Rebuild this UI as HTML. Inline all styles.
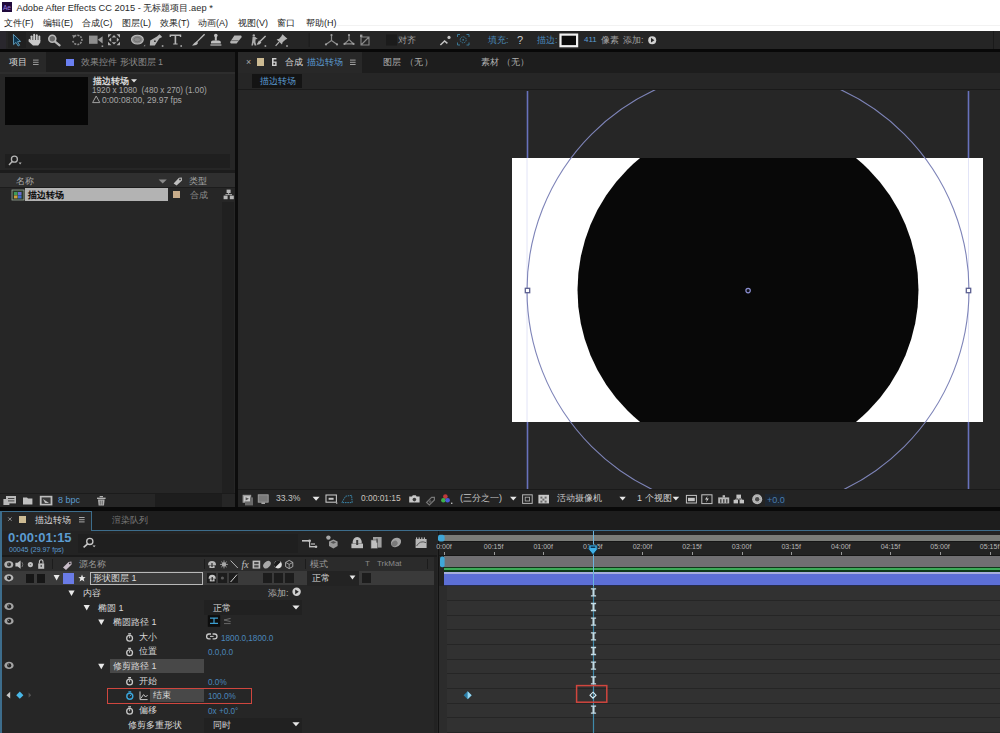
<!DOCTYPE html>
<html><head><meta charset="utf-8">
<style>
html,body{margin:0;padding:0;}
body{width:1000px;height:733px;overflow:hidden;position:relative;background:#262626;font-family:"Liberation Sans",sans-serif;}
.a{position:absolute;}
.t{position:absolute;white-space:nowrap;font-size:9px;line-height:10px;color:#a8a8a8;}
.b{color:#5b9bd0;}
.w{color:#d8d8d8;}
</style></head><body>

<!-- title bar + menu -->
<div class="a" style="left:0;top:0;width:1000px;height:31px;background:#fff;"></div>
<div class="a" style="left:337px;top:25px;width:663px;height:1px;background:#f2f2f2;"></div>
<div class="a" style="left:1.5px;top:2.4px;width:10.5px;height:9.6px;background:#200a3c;"></div>
<div class="t" style="left:3px;top:3.5px;font-size:6.5px;line-height:8px;color:#9c80e0;">Ae</div>
<div class="t" style="left:16.5px;top:3px;font-size:9.3px;line-height:11px;color:#2a2a2a;">Adobe After Effects CC 2015 - 无标题项目.aep *</div>
<div class="t" style="left:4px;top:18px;color:#1c1c1c;">文件(F)</div>
<div class="t" style="left:43px;top:18px;color:#1c1c1c;">编辑(E)</div>
<div class="t" style="left:82px;top:18px;color:#1c1c1c;">合成(C)</div>
<div class="t" style="left:122px;top:18px;color:#1c1c1c;">图层(L)</div>
<div class="t" style="left:160px;top:18px;color:#1c1c1c;">效果(T)</div>
<div class="t" style="left:198px;top:18px;color:#1c1c1c;">动画(A)</div>
<div class="t" style="left:238px;top:18px;color:#1c1c1c;">视图(V)</div>
<div class="t" style="left:277px;top:18px;color:#1c1c1c;">窗口</div>
<div class="t" style="left:306px;top:18px;color:#1c1c1c;">帮助(H)</div>

<!-- toolbar -->
<div class="a" style="left:0;top:31px;width:1000px;height:18px;background:#252525;"></div>
<div class="a" style="left:0;top:49px;width:1000px;height:3px;background:#080808;"></div>

<div class="t" style="left:398px;top:35px;color:#a0a0a0;">对齐</div>
<div class="t b" style="left:488px;top:35px;color:#4a88b8;">填充:</div>
<div class="t" style="left:517px;top:34px;color:#c8c8c8;font-size:11px;line-height:12px;">?</div>
<div class="t b" style="left:537px;top:35px;color:#4a88b8;">描边:</div>
<div class="t b" style="left:584px;top:35px;font-size:8px;">411</div>
<div class="t" style="left:601px;top:35px;color:#a0a0a0;">像素</div>
<div class="t" style="left:623px;top:35px;color:#a0a0a0;">添加:</div>

<!-- PROJECT PANEL -->
<div class="a" style="left:0;top:52px;width:235px;height:21px;background:#1d1d1d;"></div>
<div class="a" style="left:0;top:52px;width:46px;height:21px;background:#282828;"></div>
<div class="t w" style="left:9px;top:57px;">项目</div>
<div class="a" style="left:66px;top:59px;width:8px;height:7px;background:#6a7ff0;"></div>
<div class="t" style="left:81px;top:57px;color:#8a8a8a;">效果控件 形状图层 1</div>
<div class="a" style="left:0;top:73px;width:235px;height:434px;background:#262626;"></div>
<div class="a" style="left:0;top:72px;width:235px;height:2px;background:#2d2d2d;"></div>
<div class="a" style="left:5px;top:77px;width:83px;height:48px;background:#070707;"></div>
<div class="t w" style="left:93px;top:76px;font-weight:bold;">描边转场</div>
<div class="t" style="left:92px;top:86px;font-size:8.2px;">1920 x 1080 &nbsp;(480 x 270) (1.00)</div>
<div class="t" style="left:102px;top:95px;font-size:8.5px;">0:00:08:00, 29.97 fps</div>
<div class="a" style="left:5px;top:154px;width:225px;height:14px;background:#1f1f1f;"></div>
<div class="a" style="left:0;top:169.5px;width:235px;height:3.5px;background:#1c1c1c;"></div>
<div class="a" style="left:0;top:173px;width:235px;height:13.5px;background:#2f2f2f;"></div>
<div class="t" style="left:16px;top:176px;">名称</div>
<div class="t" style="left:189px;top:176px;">类型</div>
<div class="a" style="left:0;top:186.5px;width:235px;height:1.5px;background:#1c1c1c;"></div>
<div class="a" style="left:25px;top:188px;width:143px;height:13px;background:#b3b3b3;"></div>
<div class="t" style="left:28px;top:190px;color:#0a0a0a;font-weight:bold;">描边转场</div>
<div class="a" style="left:173px;top:191px;width:7px;height:7px;background:#c8ac8a;"></div>
<div class="t" style="left:190px;top:190px;color:#8a8a8a;">合成</div>
<div class="a" style="left:222px;top:202px;width:12px;height:291px;background:#202020;"></div>
<div class="a" style="left:0;top:493px;width:235px;height:14px;background:#262626;"></div>
<div class="t b" style="left:58px;top:495px;">8 bpc</div>

<!-- gap -->
<div class="a" style="left:235px;top:52px;width:3px;height:455px;background:#0c0c0c;"></div>

<!-- COMP PANEL -->
<div class="a" style="left:238px;top:52px;width:762px;height:21px;background:#1d1d1d;"></div>
<div class="a" style="left:238px;top:52px;width:124px;height:21px;background:#282828;"></div>
<div class="t" style="left:246px;top:57px;">×</div>
<div class="a" style="left:257px;top:58px;width:7px;height:8px;background:#cdbb93;"></div>
<div class="t w" style="left:285px;top:57px;">合成</div>
<div class="t b" style="left:307px;top:57px;">描边转场</div>
<div class="t" style="left:383px;top:57px;letter-spacing:0.4px;color:#b0b0b0;">图层 （无）</div>
<div class="t" style="left:481px;top:57px;color:#b0b0b0;">素材 （无）</div>
<div class="a" style="left:238px;top:73px;width:762px;height:16px;background:#262626;"></div>
<div class="a" style="left:252px;top:74px;width:50px;height:14px;background:#141414;"></div>
<div class="t b" style="left:260px;top:76px;">描边转场</div>
<div class="a" style="left:238px;top:89px;width:762px;height:1px;background:#1a1a1a;"></div>
<div class="a" style="left:238px;top:90px;width:762px;height:399px;background:#262626;"></div>

<!-- viewer drawing -->
<svg class="a" style="left:238px;top:90px;" width="762" height="399" viewBox="238 90 762 399">
  <rect x="512" y="158" width="471" height="264" fill="#ffffff"/>
  <clipPath id="cl"><rect x="512" y="158" width="471" height="264"/></clipPath>
  <circle cx="748" cy="290" r="170.5" fill="#080808" clip-path="url(#cl)"/>
  <line x1="527" y1="158.5" x2="527" y2="421.5" stroke="#c4c8ee" stroke-width="1" stroke-dasharray="1 1"/>
  <line x1="968.5" y1="158.5" x2="968.5" y2="421.5" stroke="#c4c8ee" stroke-width="1" stroke-dasharray="1 1"/>
  <circle cx="748" cy="290.3" r="221" fill="none" stroke="#7e84b8" stroke-width="1.1"/>
  <path d="M527.5,91 L527.5,158 M527.5,422 L527.5,489 M968.5,91 L968.5,158 M968.5,422 L968.5,489" stroke="#6872bc" stroke-width="1.6"/>
  <rect x="525.3" y="288.3" width="4.4" height="4.4" fill="#fff" stroke="#5c6090" stroke-width="1.3"/>
  <rect x="966.3" y="288.3" width="4.4" height="4.4" fill="#fff" stroke="#5c6090" stroke-width="1.3"/>
  <circle cx="748.1" cy="290.6" r="2.2" fill="#101018" stroke="#8a8ed0" stroke-width="1.2"/>
</svg>

<!-- comp bottom toolbar -->
<div class="a" style="left:238px;top:489px;width:762px;height:18px;background:#232323;"></div>
<div class="t" style="left:276px;top:493px;font-size:8.6px;color:#c4c4c4;">33.3%</div>
<div class="t" style="left:361px;top:493px;font-size:8.4px;color:#c8c2bc;">0:00:01:15</div>
<div class="t" style="left:460px;top:493px;color:#c8c8c8;">(三分之一)</div>
<div class="t" style="left:557px;top:493px;color:#c8c8c8;">活动摄像机</div>
<div class="t" style="left:637px;top:493px;color:#d0d0d0;">1 个视图</div>
<div class="a" style="left:765px;top:494px;width:20px;height:12px;background:#1d2631;"></div>
<div class="t b" style="left:767px;top:495px;color:#4a7cae;">+0.0</div>

<!-- black strip -->
<div class="a" style="left:0;top:507px;width:1000px;height:4px;background:#090909;"></div>

<!-- TIMELINE PANEL -->
<div class="a" style="left:0;top:511px;width:1000px;height:222px;background:#262626;"></div>
<div class="a" style="left:0;top:511px;width:1000px;height:20px;background:#1d1d1d;"></div>
<div class="a" style="left:1px;top:511px;width:91px;height:20px;background:#262626;border:1px solid #3d6d8c;border-bottom:none;box-sizing:border-box;"></div>
<div class="a" style="left:92px;top:530px;width:908px;height:1px;background:#3d6d8c;"></div>
<div class="a" style="left:0;top:511px;width:2px;height:222px;background:#3d6d8c;"></div>
<div class="a" style="left:19px;top:516px;width:7px;height:7px;background:#cdbb93;"></div>
<div class="t w" style="left:35px;top:515px;">描边转场</div>
<div class="t" style="left:112px;top:515px;color:#7a7a7a;">渲染队列</div>


<!-- timeline left -->
<div class="a" style="left:2px;top:531px;width:435px;height:25px;background:#232323;"></div>
<div class="a" style="left:78px;top:534px;width:220px;height:19px;background:#1f1f1f;"></div>
<div class="t b" style="left:8px;top:531px;font-size:13px;line-height:14px;font-weight:bold;">0:00:01:15</div>
<div class="t b" style="left:9px;top:546px;font-size:7px;line-height:8px;">00045 (29.97 fps)</div>
<div class="a" style="left:2px;top:555px;width:435px;height:2px;background:#1a1a1a;"></div>
<div class="a" style="left:2px;top:557px;width:435px;height:14px;background:#2b2b2b;"></div>
<div class="a" style="left:2px;top:571px;width:435px;height:14px;background:#3a3a3a;"></div>
<div class="a" style="left:2px;top:585px;width:435px;height:148px;background:#262626;"></div>
<div class="a" style="left:434px;top:557px;width:3px;height:176px;background:#222;"></div>
<!-- header texts -->
<div class="t" style="left:79px;top:559px;color:#9a9a9a;">源名称</div>
<div class="t" style="left:310px;top:559px;color:#9a9a9a;">模式</div>
<div class="t" style="left:365px;top:559px;color:#8a8a8a;font-size:8px;">T</div>
<div class="t" style="left:377px;top:559px;color:#8a8a8a;font-size:8px;">TrkMat</div>
<div class="a" style="left:52px;top:559px;width:1px;height:10px;background:#1c1c1c;"></div>
<div class="a" style="left:204px;top:559px;width:1px;height:10px;background:#1c1c1c;"></div>
<div class="a" style="left:305px;top:559px;width:1px;height:10px;background:#1c1c1c;"></div>
<div class="a" style="left:427px;top:559px;width:1px;height:10px;background:#1c1c1c;"></div>
<!-- layer row -->
<div class="a" style="left:26px;top:574px;width:8px;height:9px;background:#161616;"></div>
<div class="a" style="left:37px;top:574px;width:8px;height:9px;background:#161616;"></div>
<div class="a" style="left:63px;top:572.5px;width:11px;height:11.5px;background:#6a7be6;"></div>
<div class="a" style="left:90px;top:572px;width:113px;height:13px;border:1px solid #b9b9b9;box-sizing:border-box;background:#3a3a3a;"></div>
<div class="t w" style="left:93px;top:573px;">形状图层 1</div>
<div class="a" style="left:207px;top:573px;width:9px;height:10px;background:#1c1c1c;"></div>
<div class="a" style="left:218px;top:573px;width:9px;height:10px;background:#1c1c1c;"></div>
<div class="a" style="left:229px;top:573px;width:9px;height:10px;background:#1c1c1c;"></div>
<div class="a" style="left:263px;top:573px;width:9px;height:10px;background:#1c1c1c;"></div>
<div class="a" style="left:274px;top:573px;width:9px;height:10px;background:#1c1c1c;"></div>
<div class="a" style="left:285px;top:573px;width:9px;height:10px;background:#1c1c1c;"></div>
<div class="a" style="left:307px;top:571px;width:52px;height:15px;background:#232323;"></div>
<div class="t w" style="left:312px;top:573px;">正常</div>
<div class="a" style="left:362px;top:573px;width:9px;height:10px;background:#1c1c1c;"></div>
<!-- property rows -->
<div class="t w" style="left:83px;top:588px;">内容</div>
<div class="t" style="left:268px;top:588px;color:#b0b0b0;">添加:</div>
<div class="t w" style="left:98px;top:603px;">椭圆 1</div>
<div class="a" style="left:204px;top:600px;width:98px;height:15px;background:#212121;"></div>
<div class="t w" style="left:213px;top:603px;">正常</div>
<div class="t w" style="left:113px;top:617px;">椭圆路径 1</div>
<div class="t w" style="left:139px;top:632px;">大小</div>
<div class="t b" style="left:221px;top:633.5px;font-size:8.2px;color:#4a86bc;">1800.0,1800.0</div>
<div class="t w" style="left:139px;top:646px;">位置</div>
<div class="t b" style="left:208px;top:647.5px;font-size:8.2px;color:#4a86bc;">0.0,0.0</div>
<div class="a" style="left:110px;top:659px;width:94px;height:14px;background:#484848;"></div>
<div class="t w" style="left:113px;top:661px;">修剪路径 1</div>
<div class="t w" style="left:139px;top:676px;">开始</div>
<div class="t b" style="left:208px;top:677.5px;font-size:8.2px;color:#4a86bc;">0.0%</div>
<div class="a" style="left:150px;top:689px;width:54px;height:13px;background:#484848;"></div>
<div class="t w" style="left:153px;top:690px;">结束</div>
<div class="t b" style="left:208px;top:691.5px;font-size:8.2px;color:#4a86bc;">100.0%</div>
<div class="a" style="left:107px;top:688px;width:145px;height:16px;border:1.5px solid #d0463e;box-sizing:border-box;"></div>
<div class="t w" style="left:139px;top:705px;">偏移</div>
<div class="t b" style="left:208px;top:706.5px;font-size:8.2px;color:#4a86bc;">0x +0.0°</div>
<div class="t w" style="left:128px;top:720px;">修剪多重形状</div>
<div class="a" style="left:204px;top:718px;width:98px;height:15px;background:#212121;"></div>
<div class="t w" style="left:213px;top:720px;">同时</div>

<!-- timeline right -->
<div class="a" style="left:438px;top:531px;width:562px;height:202px;background:#232323;"></div>
<div class="a" style="left:437.5px;top:531px;width:1.5px;height:202px;background:#121212;"></div>
<div class="a" style="left:444px;top:535px;width:556px;height:6px;background:#7a7c78;"></div>
<div class="a" style="left:439px;top:541px;width:561px;height:1px;background:#161616;"></div>
<div class="t" style="left:429.0px;top:543px;width:30px;text-align:center;font-size:7px;line-height:8px;color:#b8b8b8;">0:00f</div>
<div class="a" style="left:444.0px;top:552px;width:1px;height:3px;background:#9a9a9a;"></div>
<div class="t" style="left:478.6px;top:543px;width:30px;text-align:center;font-size:7px;line-height:8px;color:#b8b8b8;">00:15f</div>
<div class="a" style="left:493.6px;top:552px;width:1px;height:3px;background:#9a9a9a;"></div>
<div class="t" style="left:528.2px;top:543px;width:30px;text-align:center;font-size:7px;line-height:8px;color:#b8b8b8;">01:00f</div>
<div class="a" style="left:543.2px;top:552px;width:1px;height:3px;background:#9a9a9a;"></div>
<div class="t" style="left:577.8px;top:543px;width:30px;text-align:center;font-size:7px;line-height:8px;color:#b8b8b8;">01:15f</div>
<div class="a" style="left:592.8px;top:552px;width:1px;height:3px;background:#9a9a9a;"></div>
<div class="t" style="left:627.4px;top:543px;width:30px;text-align:center;font-size:7px;line-height:8px;color:#b8b8b8;">02:00f</div>
<div class="a" style="left:642.4px;top:552px;width:1px;height:3px;background:#9a9a9a;"></div>
<div class="t" style="left:677.0px;top:543px;width:30px;text-align:center;font-size:7px;line-height:8px;color:#b8b8b8;">02:15f</div>
<div class="a" style="left:692.0px;top:552px;width:1px;height:3px;background:#9a9a9a;"></div>
<div class="t" style="left:726.6px;top:543px;width:30px;text-align:center;font-size:7px;line-height:8px;color:#b8b8b8;">03:00f</div>
<div class="a" style="left:741.6px;top:552px;width:1px;height:3px;background:#9a9a9a;"></div>
<div class="t" style="left:776.2px;top:543px;width:30px;text-align:center;font-size:7px;line-height:8px;color:#b8b8b8;">03:15f</div>
<div class="a" style="left:791.2px;top:552px;width:1px;height:3px;background:#9a9a9a;"></div>
<div class="t" style="left:825.8px;top:543px;width:30px;text-align:center;font-size:7px;line-height:8px;color:#b8b8b8;">04:00f</div>
<div class="a" style="left:840.8px;top:552px;width:1px;height:3px;background:#9a9a9a;"></div>
<div class="t" style="left:875.4px;top:543px;width:30px;text-align:center;font-size:7px;line-height:8px;color:#b8b8b8;">04:15f</div>
<div class="a" style="left:890.4px;top:552px;width:1px;height:3px;background:#9a9a9a;"></div>
<div class="t" style="left:925.0px;top:543px;width:30px;text-align:center;font-size:7px;line-height:8px;color:#b8b8b8;">05:00f</div>
<div class="a" style="left:940.0px;top:552px;width:1px;height:3px;background:#9a9a9a;"></div>
<div class="t" style="left:974.6px;top:543px;width:30px;text-align:center;font-size:7px;line-height:8px;color:#b8b8b8;">05:15f</div>
<div class="a" style="left:989.6px;top:552px;width:1px;height:3px;background:#9a9a9a;"></div>
<div class="a" style="left:439px;top:555px;width:561px;height:1px;background:#161616;"></div>
<div class="a" style="left:444px;top:556px;width:556px;height:11px;background:#706f72;"></div>
<div class="a" style="left:444px;top:566.5px;width:556px;height:5.5px;background:#0e3818;"></div>
<div class="a" style="left:444px;top:568px;width:556px;height:2px;background:#3cab58;"></div>
<div class="a" style="left:444px;top:572px;width:556px;height:13px;background:#5c6fd6;"></div>
<div class="a" style="left:444px;top:585px;width:556px;height:1px;background:#262c4e;"></div>
<div class="a" style="left:444px;top:572px;width:556px;height:1.6px;background:#a6aedd;"></div>
<div class="a" style="left:439px;top:586px;width:561px;height:147px;background:#2c2c2c;"></div>
<div class="a" style="left:447px;top:586px;width:553px;height:147px;background:#313131;"></div>
<div class="a" style="left:447px;top:600.3px;width:553px;height:1px;background:#252525;"></div>
<div class="a" style="left:447px;top:614.8px;width:553px;height:1px;background:#252525;"></div>
<div class="a" style="left:447px;top:629.3px;width:553px;height:1px;background:#252525;"></div>
<div class="a" style="left:447px;top:643.8px;width:553px;height:1px;background:#252525;"></div>
<div class="a" style="left:447px;top:658.8px;width:553px;height:1px;background:#252525;"></div>
<div class="a" style="left:447px;top:673.3px;width:553px;height:1px;background:#252525;"></div>
<div class="a" style="left:447px;top:687.8px;width:553px;height:1px;background:#252525;"></div>
<div class="a" style="left:447px;top:702.8px;width:553px;height:1px;background:#252525;"></div>
<div class="a" style="left:447px;top:717.3px;width:553px;height:1px;background:#252525;"></div>
<div class="a" style="left:447px;top:731.8px;width:553px;height:1px;background:#252525;"></div>
<svg class="a" style="left:0;top:0;" width="1000" height="733" viewBox="0 0 1000 733">
<g id="toolbar">
<rect x="0" y="31" width="6" height="18" fill="#29272d"/>
<rect x="8" y="32" width="18" height="16" fill="#202020"/>
<path d="M13.4,34.4 L13.6,44.6 L16,42.4 L18.2,46 L19.6,45.2 L17.5,41.7 L20.6,41.4 Z" fill="#0b3550" stroke="#6fb0d0" stroke-width="0.8" stroke-linejoin="round"/>
<g fill="#c9c9c9">
<rect x="30.6" y="35.4" width="1.9" height="6" rx="0.95"/>
<rect x="33.2" y="33.8" width="1.9" height="7" rx="0.95"/>
<rect x="35.8" y="34.2" width="1.9" height="7" rx="0.95"/>
<rect x="38.4" y="35.6" width="1.9" height="6" rx="0.95"/>
<path d="M30.6,40 L40.3,40 L40.3,42.6 L38.2,45.6 L33,45.6 L28.6,41.4 L28.6,39.6 L29.8,38.8 Z"/>
</g>
<circle cx="52.3" cy="38.8" r="3.5" fill="#6a6a6a" stroke="#b8b8b8" stroke-width="1.6"/>
<line x1="55" y1="41.6" x2="59.6" y2="45.4" stroke="#b8b8b8" stroke-width="2.2" stroke-linecap="round"/>
<path d="M74.5,36.2 A4.6,4.6 0 1 1 72.8,40.8" fill="none" stroke="#8c8c8c" stroke-width="1.6" stroke-dasharray="2 1"/>
<path d="M72.2,35 L76,35.5 L73.5,38.5 Z" fill="#8c8c8c"/>
<rect x="89" y="35.6" width="8.6" height="8.2" fill="#8e8e8e"/>
<path d="M97.8,39.7 L102.6,36.2 L102.6,43.4 Z" fill="#9a9a9a"/>
<rect x="101.6" y="45.4" width="1.6" height="1.6" fill="#9a9a9a"/>
<g fill="#b0b0b0">
<path d="M108,34.3 L111.5,34.3 L108,37.8 Z M120,34.3 L116.5,34.3 L120,37.8 Z M108,45.3 L111.5,45.3 L108,41.8 Z M120,45.3 L116.5,45.3 L120,41.8 Z"/>
<path d="M114,35 L116.3,37.4 L111.7,37.4 Z M114,44.6 L116.3,42.2 L111.7,42.2 Z M108.8,39.8 L111.2,37.6 L111.2,42 Z M119.2,39.8 L116.8,37.6 L116.8,42 Z"/>
</g>
<rect x="112" y="38" width="4" height="3.6" fill="#2a2a2a"/>
<ellipse cx="137.4" cy="39.6" rx="5.9" ry="4.4" fill="#8a8a8a" stroke="#bdbdbd" stroke-width="1.1"/>
<ellipse cx="137.4" cy="39.6" rx="3.4" ry="2.2" fill="none" stroke="#707070" stroke-width="0.8"/>
<path d="M143.5,46.2 L145.2,44.6 L145.2,46.2 Z" fill="#999"/>
<path d="M159.5,34.3 L162.2,37 L159.3,38.6 L154.8,45.4 L149.8,45.6 L150.2,40.6 L157,36.6 Z" fill="#b5b5b5"/>
<circle cx="154.9" cy="41.2" r="0.9" fill="#333"/>
<rect x="161.8" y="45.2" width="1.6" height="1.6" fill="#aaa"/>
<path d="M169.6,34.6 L181.2,34.6 L181.2,37 L180,37 L179.6,36 L176.2,36 L176.2,43.6 L177.6,43.6 L177.6,44.6 L173.2,44.6 L173.2,43.6 L174.6,43.6 L174.6,36 L171.2,36 L170.8,37 L169.6,37 Z" fill="#b8b8b8"/>
<rect x="180.4" y="45.2" width="1.6" height="1.6" fill="#aaa"/>
<line x1="204.6" y1="34.2" x2="196.4" y2="42.4" stroke="#bcbcbc" stroke-width="1.3"/>
<path d="M196.8,41.6 L198,43 C197,45.2 194.5,45.8 192,45.4 C193.4,44.6 194.6,42.2 196.8,41.6 Z" fill="#bcbcbc"/>
<circle cx="215.8" cy="35.6" r="1.8" fill="#c0c0c0"/>
<rect x="214.8" y="36.6" width="2" height="4" fill="#c0c0c0"/>
<path d="M211,42 Q211,40.4 213,40.4 L218.6,40.4 Q220.8,40.4 220.8,42 L220.8,43.4 L211,43.4 Z" fill="#c0c0c0"/>
<rect x="210.4" y="44.4" width="11" height="1.2" fill="#c0c0c0"/>
<path d="M234.4,35.6 L241,35.6 Q242.2,36.4 241.4,37.6 L236.6,43.6 L231,43.6 Q229.6,42.8 230.4,41.4 Z" fill="#b4b4b4"/>
<line x1="231.2" y1="40.6" x2="238.6" y2="40.6" stroke="#555" stroke-width="0.7"/>
<circle cx="253.8" cy="35.4" r="1.2" fill="#aaa"/>
<path d="M252.6,36.8 L255,36.8 L257.8,39 L255.6,39.2 L255.4,42 L256.4,45.4 L254.6,45.4 L253.6,42.6 L253,45.4 L251.4,45.4 L252.2,41 Z" fill="#aaa"/>
<line x1="265.6" y1="36" x2="260" y2="41.6" stroke="#b8b8b8" stroke-width="1.4"/>
<path d="M256.6,44.6 L259,40.4 L261.4,42.2 C260.4,44.2 258.8,44.8 256.6,44.6 Z" fill="#b8b8b8"/>
<rect x="264.6" y="45.2" width="1.6" height="1.6" fill="#aaa"/>
<path d="M282.4,34.2 L287.4,38.8 L285.4,39.8 L282.6,42.2 L282,44.6 L276.6,39.4 L279.2,38.8 L281.4,36.2 Z" fill="#b4b4b4"/>
<line x1="279" y1="42.2" x2="275.6" y2="45.8" stroke="#b4b4b4" stroke-width="1.2"/>
<rect x="286.2" y="45.2" width="1.6" height="1.6" fill="#aaa"/>
<rect x="308.6" y="33" width="1" height="14" fill="#1c1c1c"/>
<g fill="none" stroke="#8e8e8e" stroke-width="1.2">
<path d="M331.5,35 L331.5,40.4 L326.2,44.2 M331.5,40.4 L336.8,44.2"/>
<path d="M349,35 L349,39.6 M349,39.6 L344.6,43.8 L353.4,43.8 Z"/>
</g>
<g fill="#a0a0a0"><circle cx="331.5" cy="35" r="1.1"/><circle cx="326" cy="44.4" r="1.1"/><circle cx="337" cy="44.4" r="1.1"/><circle cx="349" cy="35" r="1.1"/><circle cx="344.6" cy="43.8" r="1.1"/><circle cx="353.4" cy="43.8" r="1.1"/></g>
<path d="M361,37 L369,37 L369,45 L361,45 Z M361,45 L369,37" fill="none" stroke="#8a8a8a" stroke-width="1.1"/>
<rect x="360" y="34.6" width="2.4" height="2.4" fill="#9a9a9a"/>
<rect x="386" y="34.5" width="11" height="11" fill="#1b1b1b"/>
<path d="M440.4,45 L444.6,41 L447.4,43.4" fill="none" stroke="#c4c4c4" stroke-width="1.5"/>
<circle cx="449" cy="37.4" r="1.6" fill="#c4c4c4"/>
<g fill="none" stroke="#3a7896" stroke-width="1">
<path d="M457.5,37 L457.5,34.5 L460,34.5 M466.5,34.5 L469,34.5 L469,37 M469,42.5 L469,45 L466.5,45 M460,45 L457.5,45 L457.5,42.5"/>
<circle cx="463.2" cy="39.8" r="3" stroke-dasharray="1.5 0.8"/>
</g>
<circle cx="463.2" cy="39.8" r="0.9" fill="#3a7896"/>
<rect x="560.5" y="34.6" width="16.6" height="11.6" fill="#0c0c0c" stroke="#f2f2f2" stroke-width="2.2"/>
<circle cx="652.2" cy="40.2" r="4" fill="#d0d0d0"/>
<path d="M651,37.8 L654.4,40.2 L651,42.6 Z" fill="#252525"/>
<rect x="993" y="31" width="1" height="18" fill="#1a1a1a"/>
</g>

<g id="project">
<g fill="#9a9a9a"><rect x="33" y="59.6" width="5.6" height="1"/><rect x="33" y="61.8" width="5.6" height="1"/><rect x="33" y="64" width="5.6" height="1"/></g>
<path d="M131,79.2 L137,79.2 L134,82.6 Z" fill="#e0e0e0"/>
<path d="M92.6,102.6 L96.2,96 L99.8,102.6 Z" fill="none" stroke="#a0a0a0" stroke-width="1"/>
<circle cx="14.4" cy="159.2" r="3" fill="none" stroke="#b4b4b4" stroke-width="1.3"/>
<line x1="12.2" y1="161.6" x2="9" y2="165" stroke="#b4b4b4" stroke-width="1.5"/>
<path d="M18.6,162.6 L21.6,162.6 L20.1,164.4 Z" fill="#b4b4b4"/>
<path d="M158.6,179.4 L166.8,179.4 L162.7,183.6 Z" fill="#8a8a8a"/>
<path d="M173.6,183.4 L179,177.8 L181.8,177.6 L182,180.4 L176.6,185.6 Z" fill="#c0c0c0"/>
<circle cx="180" cy="179.4" r="0.9" fill="#2c2c2c"/>
<rect x="12" y="190" width="12" height="10" fill="#2a3a2a" stroke="#9aa89a" stroke-width="0.8"/>
<rect x="14" y="192" width="3.5" height="3" fill="#3f9a5a"/>
<rect x="18" y="192" width="3.5" height="3" fill="#6a6acf"/>
<rect x="14" y="195.4" width="3.5" height="3" fill="#c9a040"/>
<rect x="18" y="195.4" width="3.5" height="3" fill="#3a6ad0"/>
<g fill="#b8b8b8"><rect x="226.6" y="189.6" width="4" height="3.4"/><rect x="223.6" y="195.6" width="4" height="3.6"/><rect x="229.8" y="195.6" width="4" height="3.6"/><rect x="228.2" y="192.6" width="0.9" height="2"/><rect x="225.4" y="194.2" width="6.6" height="0.9"/></g>
<rect x="0" y="493" width="235" height="1" fill="#1b1b1b"/>
<g fill="#b8b8b8">
<rect x="6" y="496" width="10" height="7.4"/>
<rect x="3.4" y="499" width="6" height="6"/>
</g>
<rect x="8" y="498" width="6.4" height="1" fill="#444"/>
<rect x="8" y="500.4" width="6.4" height="1" fill="#444"/>
<path d="M23,497.4 L27,497.4 L28,498.6 L32.4,498.6 L32.4,504.6 L23,504.6 Z" fill="#c0c0c0"/>
<rect x="39.8" y="495.8" width="12.6" height="9.6" fill="#bdbdbd"/>
<rect x="41.6" y="497.4" width="9" height="6.4" fill="#3a3a3a"/>
<path d="M43,499 L49,503 L45,503 Z" fill="#bdbdbd"/>
<rect x="97" y="497.6" width="8.6" height="1.4" fill="#b0b0b0"/>
<rect x="99.6" y="496" width="3.4" height="1.2" fill="#b0b0b0"/>
<path d="M98,499.6 L104.6,499.6 L104,505.4 L98.6,505.4 Z" fill="#b0b0b0"/>
<g fill="#555"><rect x="99.8" y="500.6" width="0.8" height="4"/><rect x="101.8" y="500.6" width="0.8" height="4"/></g>
<rect x="155" y="494" width="67" height="13" fill="#1d1d1d"/>
</g>

<g id="comp">
<g fill="#a0a0a0"><rect x="350" y="59.6" width="5.6" height="1"/><rect x="350" y="61.8" width="5.6" height="1"/><rect x="350" y="64" width="5.6" height="1"/></g>
<path d="M272,58 L276.4,58 L276.4,59.4 L273.6,59.4 L273.6,61.4 L276.6,61.4 L276.6,66 L272,66 Z" fill="#d0d0d0"/>
<rect x="273.4" y="62.8" width="1.8" height="1.8" fill="#282828"/>
<rect x="238" y="489" width="762" height="1" fill="#1a1a1a"/>
<rect x="242.6" y="494.8" width="8.6" height="8" fill="#9a9a9a"/>
<rect x="245" y="497.4" width="8" height="8" fill="#6a6a6a"/>
<rect x="244" y="496.2" width="6" height="5.2" fill="#c8c8c8"/>
<path d="M245.6,497.2 L249,498.8 L245.6,500.4 Z" fill="#555"/>
<rect x="258.2" y="494.8" width="10" height="7.4" fill="#7a7a7a" stroke="#a8a8a8" stroke-width="0.8"/>
<rect x="261.4" y="502.4" width="3.6" height="1.6" fill="#a8a8a8"/>
<path d="M312.6,496.8 L319.6,496.8 L316.1,500.8 Z" fill="#e8e8e8"/>
<rect x="326" y="495" width="10.4" height="7.2" fill="none" stroke="#c4c4c4" stroke-width="1.1"/>
<rect x="328.6" y="497.8" width="5" height="2" fill="#c4c4c4"/>
<rect x="336" y="502.4" width="1.4" height="1.4" fill="#aaa"/>
<path d="M341.8,502.6 L345.6,496.2 L351.6,495.4 L352.2,502.6 Z" fill="none" stroke="#3b87ab" stroke-width="1" stroke-dasharray="1.6 0.8"/>
<path d="M409.2,496.6 L412,496.6 L412.8,495.2 L415.8,495.2 L416.6,496.6 L419.6,496.6 L419.6,502.6 L409.2,502.6 Z" fill="#c8c8c8"/>
<circle cx="414.4" cy="499.6" r="1.8" fill="#3a3a3a"/>
<path d="M426.6,502.4 L431.6,497.4 L434.4,497.4 L434.4,500 L429.4,505 Z" fill="none" stroke="#777" stroke-width="1.2"/>
<circle cx="430" cy="501.6" r="1.5" fill="#555"/>
<circle cx="445.4" cy="496.6" r="2.3" fill="#c03a3a"/>
<circle cx="443.4" cy="500.2" r="2.3" fill="#3db04a"/>
<circle cx="447.6" cy="500.2" r="2.3" fill="#4a5ad8"/>
<rect x="451" y="502.6" width="1.4" height="1.4" fill="#bbb"/>
<path d="M510,496.8 L516.6,496.8 L513.3,500.6 Z" fill="#e8e8e8"/>
<rect x="522.6" y="494.8" width="9.6" height="8.6" fill="none" stroke="#b4b4b4" stroke-width="1"/>
<rect x="525.2" y="497.2" width="4.4" height="3.8" fill="none" stroke="#b4b4b4" stroke-width="0.8"/>
<rect x="538.4" y="494.8" width="10.6" height="8.6" fill="#c8c8c8"/>
<g fill="#6a6a6a"><rect x="540.4" y="496.6" width="2" height="2"/><rect x="544.6" y="496.6" width="2" height="2"/><rect x="542.4" y="498.6" width="2" height="2"/><rect x="540.4" y="500.6" width="2" height="2"/><rect x="544.6" y="500.6" width="2" height="2"/></g>
<path d="M619.4,496.8 L625.8,496.8 L622.6,500.6 Z" fill="#e8e8e8"/>
<path d="M672.6,496.8 L679.2,496.8 L675.9,500.6 Z" fill="#e8e8e8"/>
<rect x="686.4" y="495.4" width="10" height="7.6" fill="none" stroke="#c4c4c4" stroke-width="1"/>
<rect x="688" y="497.8" width="6.8" height="3.4" fill="#c4c4c4"/>
<rect x="701.8" y="494.8" width="10.2" height="8.8" fill="none" stroke="#c4c4c4" stroke-width="1"/>
<path d="M707.6,496 L705,499.6 L707,499.6 L706,502.4 L708.8,498.6 L706.8,498.6 Z" fill="#d8d8d8"/>
<rect x="718.2" y="497.4" width="11" height="6" fill="#b8b8b8"/>
<g fill="#333"><rect x="720.2" y="499.2" width="1.2" height="3.6"/><rect x="723.2" y="499.2" width="1.2" height="3.6"/><rect x="726.2" y="499.2" width="1.2" height="3.6"/></g>
<rect x="722.6" y="495.2" width="2.4" height="2.4" fill="#b8b8b8"/>
<rect x="736.4" y="494.6" width="4.6" height="3.6" fill="#c4c4c4"/>
<rect x="733.6" y="499.8" width="4.4" height="3.6" fill="#c4c4c4"/>
<rect x="739.6" y="499.8" width="4.4" height="3.6" fill="#c4c4c4"/>
<path d="M738.7,498 L738.7,499 M735.8,499.8 L735.8,499 L741.8,499 L741.8,499.8" fill="none" stroke="#c4c4c4" stroke-width="0.9"/>
<circle cx="757.2" cy="499.2" r="5" fill="#bdbdbd"/>
<circle cx="757.2" cy="499.2" r="2.2" fill="#4a4a4a"/>
<circle cx="757.2" cy="499.2" r="3.6" fill="none" stroke="#8a8a8a" stroke-width="0.6" stroke-dasharray="1 0.8"/>
</g>

<g id="timeline">
<g fill="#a8a8a8"><rect x="79" y="517" width="5.6" height="1"/><rect x="79" y="519.2" width="5.6" height="1"/><rect x="79" y="521.4" width="5.6" height="1"/></g>
<path d="M8.2,517.4 L11.6,520.8 M11.6,517.4 L8.2,520.8" stroke="#9a9a9a" stroke-width="0.9"/>
<!-- timeline search -->
<circle cx="89.8" cy="541.4" r="3.1" fill="none" stroke="#c8c8c8" stroke-width="1.3"/>
<line x1="87.6" y1="543.8" x2="83.6" y2="547.4" stroke="#c8c8c8" stroke-width="1.6"/>
<path d="M92.6,545.4 L95.6,545.4 L94.1,547.2 Z" fill="#c8c8c8"/>
<!-- timeline toolbar icons -->
<g fill="#c0c0c0">
<rect x="302" y="540" width="8" height="1.6"/><circle cx="309.6" cy="540.8" r="1.4"/>
<rect x="309" y="542" width="1.2" height="5"/><rect x="309" y="546" width="6" height="1.4"/><circle cx="316" cy="546.7" r="1.3"/>
<rect x="311" y="543.4" width="4" height="1.2"/>
</g>
<circle cx="328.4" cy="537.6" r="2.2" fill="#a8a8a8"/>
<path d="M329,541.6 L333.4,539.4 L337.6,541.6 L337.6,546 L333.4,548.4 L329,546 Z" fill="#9a9a9a"/>
<path d="M330.6,542.4 L333.4,541 L336.2,542.4 L333.4,543.8 Z" fill="#555"/>
<rect x="351.4" y="543.6" width="11.6" height="4.6" fill="#bdbdbd"/>
<path d="M352.6,543.6 Q352.6,537 357.2,537 Q361.8,537 361.8,543.6 Z" fill="#bdbdbd"/>
<rect x="356.2" y="540" width="2" height="5" fill="#3a3a3a"/>
<rect x="373" y="537" width="8.6" height="10.6" fill="#a0a0a0"/>
<rect x="371" y="540" width="6.4" height="8.4" fill="#c0c0c0" stroke="#555" stroke-width="0.6"/>
<rect x="376.4" y="538.6" width="1.2" height="4" fill="#444"/>
<ellipse cx="396" cy="542.4" rx="5.4" ry="4.4" transform="rotate(-35 396 542.4)" fill="#a4a4a4"/>
<ellipse cx="394.6" cy="543.6" rx="3.2" ry="2.6" transform="rotate(-35 394.6 543.6)" fill="#7a7a7a"/>
<rect x="415.6" y="539" width="11" height="9" fill="#b8b8b8"/>
<path d="M416.6,546 Q420,540 426,542.6" fill="none" stroke="#555" stroke-width="1"/>
<g fill="#b8b8b8"><rect x="416" y="537.4" width="1.2" height="1.6"/><rect x="418.6" y="537.4" width="1.2" height="1.6"/><rect x="421.2" y="537.4" width="1.2" height="1.6"/><rect x="423.8" y="537.4" width="1.2" height="1.6"/></g>
<!-- header switches -->
<g id="eye_h">
<ellipse cx="8.8" cy="564.6" rx="4.5" ry="3.5" fill="#b0b0b0"/>
<circle cx="9" cy="564.6" r="2" fill="#2b2b2b"/>
<circle cx="8.3" cy="564" r="0.6" fill="#999"/>
</g>
<path d="M15.4,562.8 L17.6,562.8 L20.6,560.4 L20.6,568.8 L17.6,566.4 L15.4,566.4 Z" fill="#c4c4c4"/>
<path d="M22,562.2 Q23.6,564.6 22,567" fill="none" stroke="#888" stroke-width="0.8"/>
<circle cx="30.4" cy="564.6" r="2.6" fill="#c0c0c0"/>
<circle cx="30.4" cy="564.6" r="0.7" fill="#666"/>
<path d="M39.4,563.6 L39.4,562 Q39.4,559.8 41.2,559.8 Q43,559.8 43,562 L43,563.6" fill="none" stroke="#c0c0c0" stroke-width="1.1"/>
<rect x="38.2" y="563.4" width="6" height="5.4" fill="#c0c0c0"/>
<rect x="40.6" y="565" width="1.2" height="2" fill="#444"/>
<path d="M63,567.6 L68.6,562 L71.4,561.6 L71.6,564.4 L66,570 Z" fill="#c8bcc8"/>
<circle cx="69.8" cy="563.4" r="0.9" fill="#2b2b2b"/>
<!-- column header switch icons -->
<g fill="#b8b8b8">
<path d="M208,565.2 Q208,561 212,561 Q216,561 216,565.2 Z"/><rect x="209.4" y="565.6" width="5.2" height="2.4"/>
</g>
<rect x="211.4" y="563" width="1.2" height="4" fill="#2b2b2b"/>
<circle cx="224" cy="564.4" r="2.2" fill="#a8a8a8"/>
<g stroke="#a8a8a8" stroke-width="0.8"><path d="M224,560.4 L224,568.4 M220,564.4 L228,564.4 M221.2,561.6 L226.8,567.2 M226.8,561.6 L221.2,567.2"/></g>
<line x1="230.6" y1="560.6" x2="237.8" y2="568" stroke="#b8b8b8" stroke-width="1"/>
<text x="241.6" y="568.4" font-family="Liberation Serif" font-style="italic" font-size="10" fill="#c0c0c0">fx</text>
<rect x="252.6" y="560.6" width="7.6" height="8" fill="#bdbdbd"/>
<rect x="254.2" y="562" width="4.4" height="2.2" fill="#4a4a4a"/><rect x="254.2" y="565.2" width="4.4" height="2.2" fill="#4a4a4a"/>
<ellipse cx="267" cy="564.6" rx="4.4" ry="3" transform="rotate(-45 267 564.6)" fill="#a8a8a8"/>
<circle cx="278" cy="564.6" r="3.8" fill="#e0e0e0"/>
<path d="M275.3,567.3 A3.8,3.8 0 0 1 280.7,561.9 Z" fill="#1a1a1a"/>
<path d="M289.2,560.4 L292.8,562.4 L292.8,566.6 L289.2,568.6 L285.6,566.6 L285.6,562.4 Z" fill="none" stroke="#b4b4b4" stroke-width="0.9"/>
<path d="M285.6,562.4 L289.2,564.4 L292.8,562.4 M289.2,564.4 L289.2,568.6" fill="none" stroke="#b4b4b4" stroke-width="0.8"/>
<!-- layer row -->
<ellipse cx="8.8" cy="577.8" rx="4.6" ry="3.6" fill="#b8b8b8"/>
<circle cx="9" cy="577.8" r="2.1" fill="#1e1e1e"/>
<circle cx="8.3" cy="577.2" r="0.6" fill="#999"/>
<path d="M53.6,575 L59.6,575 L56.6,580.6 Z" fill="#e8e8e8"/>
<path d="M82,574.6 L83,577 L85.6,577.2 L83.6,578.8 L84.4,581.4 L82,580 L79.6,581.4 L80.4,578.8 L78.4,577.2 L81,577 Z" fill="#e8e8e8"/>
<g fill="#c4c4c4"><path d="M208.6,578.8 Q208.6,574.8 212.2,574.8 Q215.8,574.8 215.8,578.8 Z"/><rect x="209.8" y="579.2" width="4.8" height="2.2"/></g>
<rect x="211.6" y="577" width="1.2" height="3.4" fill="#1c1c1c"/>
<circle cx="222.4" cy="578" r="1.6" fill="#5a5a5a"/>
<line x1="230.6" y1="582" x2="237" y2="574.6" stroke="#d0d0d0" stroke-width="1"/>
<path d="M349.6,575.6 L355.4,575.6 L352.5,579.4 Z" fill="#e8e8e8"/>
<!-- content rows -->
<path d="M68.4,590.6 L74.6,590.6 L71.5,596 Z" fill="#e8e8e8"/>
<circle cx="296.6" cy="591.8" r="4.2" fill="#d0d0d0"/>
<path d="M295.2,589.4 L298.8,591.8 L295.2,594.2 Z" fill="#262626"/>
<ellipse cx="9" cy="606.4" rx="4.6" ry="3.6" fill="#a4a4a4"/>
<circle cx="9.2" cy="606.4" r="2.1" fill="#222"/>
<circle cx="8.4" cy="605.8" r="0.6" fill="#888"/>
<path d="M83.6,605 L89.8,605 L86.7,610.4 Z" fill="#e8e8e8"/>
<path d="M292.4,605.6 L299.6,605.6 L296,609.6 Z" fill="#e8e8e8"/>
<ellipse cx="9" cy="621.0" rx="4.6" ry="3.6" fill="#a4a4a4"/>
<circle cx="9.2" cy="621.0" r="2.1" fill="#222"/>
<circle cx="8.4" cy="620.4" r="0.6" fill="#888"/>
<path d="M98.2,619.6 L104.4,619.6 L101.3,625 Z" fill="#e8e8e8"/>
<rect x="207.8" y="615.2" width="12.4" height="11.6" fill="#0d0d0d"/>
<g stroke="#3c9ed0" stroke-width="1.2" fill="none"><path d="M210,618.2 L218,618.2 M210,623.4 L218,623.4 M214,618.2 L214,623.4"/></g>
<g stroke="#707070" stroke-width="0.9" fill="none"><path d="M224,620 L230.6,618.4 M224,620 L230.6,621.6 M224,623.6 L230.6,623.6"/></g>
<g id="sw1"><circle cx="129.6" cy="638.2" r="2.9" fill="none" stroke="#c8c8c8" stroke-width="1.3"/><rect x="128.2" y="633.2" width="2.8" height="1.3" fill="#c8c8c8"/><line x1="129.6" y1="638.2" x2="129.6" y2="636.2" stroke="#c8c8c8" stroke-width="0.9"/></g>
<path d="M206.6,636.4 Q206.6,634 209,634 L211,634 M210.6,638.8 L208.8,638.8 Q206.6,638.8 206.6,636.4 M212.6,634 L214.6,634 Q217,634 217,636.4 Q217,638.8 214.6,638.8 L212.6,638.8" fill="none" stroke="#c8c8c8" stroke-width="1.3"/>
<line x1="210" y1="636.4" x2="213.6" y2="636.4" stroke="#c8c8c8" stroke-width="1"/>
<use href="#sw1" y="14.6"/>
<ellipse cx="9" cy="665.4" rx="4.6" ry="3.6" fill="#a4a4a4"/>
<circle cx="9.2" cy="665.4" r="2.1" fill="#222"/>
<circle cx="8.4" cy="664.8" r="0.6" fill="#888"/>
<path d="M98.2,663.8 L104.4,663.8 L101.3,669.2 Z" fill="#e8e8e8"/>
<use href="#sw1" y="43.8"/>
<!-- keyframe nav -->
<path d="M10.2,691.8 L6.4,695.2 L10.2,698.6 Z" fill="#c8c8c8"/>
<path d="M19.8,691.6 L23.4,695.2 L19.8,698.8 L16.2,695.2 Z" fill="#49b8e8"/>
<path d="M28.6,692.6 L31.2,695.2 L28.6,697.8 Z" fill="#555"/>
<g><circle cx="129.8" cy="696.2" r="3" fill="none" stroke="#3aa6dc" stroke-width="1.4"/><rect x="128.4" y="691.2" width="2.8" height="1.3" fill="#3aa6dc"/><line x1="129.8" y1="696.2" x2="131.4" y2="694.6" stroke="#3aa6dc" stroke-width="0.9"/></g>
<path d="M140,691.4 L140,699.6 L147.6,699.6 M140.6,698.6 L143.6,694.6 L145.6,697 L147.6,695" fill="none" stroke="#c8c8c8" stroke-width="1"/>
<use href="#sw1" y="73"/>
<path d="M292.4,722.2 L299.6,722.2 L296,726.2 Z" fill="#e8e8e8"/>
<!-- track markers -->
<rect x="438" y="534.8" width="6.6" height="6.6" rx="2" fill="#3fa7d8"/>
<rect x="440" y="556.6" width="4.6" height="10.6" rx="2" fill="#3fa7d8"/>
<line x1="593.5" y1="531" x2="593.5" y2="586" stroke="#6ab4dc" stroke-width="1"/>
<line x1="593.5" y1="586" x2="593.5" y2="733" stroke="#3f8aab" stroke-width="1.2"/>
<path d="M588.8,545 L597.2,545 L597.2,549.6 L593,554.8 L588.8,549.6 Z" fill="#3fb0e6" stroke="#0d2a3a" stroke-width="0.8"/>
<rect x="590.6" y="546.4" width="4.8" height="1.6" fill="#0d3550"/>
<g id="ibeam"><path d="M590.9,588.8 L596.1,588.8 M593.5,588.8 L593.5,595.8 M590.9,595.8 L596.1,595.8" fill="none" stroke="#c4dce6" stroke-width="1.3"/><rect x="592.6" y="589" width="1.8" height="6.6" fill="#c4dce6"/></g>
<use href="#ibeam" y="14.7"/>
<use href="#ibeam" y="29.3"/>
<use href="#ibeam" y="44"/>
<use href="#ibeam" y="58.7"/>
<use href="#ibeam" y="73.3"/>
<use href="#ibeam" y="88"/>
<use href="#ibeam" y="117.4"/>
<path d="M593,692.2 L596,695.2 L593,698.2 L590,695.2 Z" fill="none" stroke="#d8eef6" stroke-width="1.1"/>
<rect x="576.6" y="685.6" width="30.2" height="16.6" fill="none" stroke="#d0463e" stroke-width="1.5"/>
<path d="M467.6,691.2 L471.6,695.2 L467.6,699.2 L463.6,695.2 Z" fill="#2b7ea8"/>
<path d="M467.6,691.2 L471.6,695.2 L467.6,699.2 Z" fill="#9ad8f0"/>
</g>

<!--SVGEND-->
</svg>
</body></html>
